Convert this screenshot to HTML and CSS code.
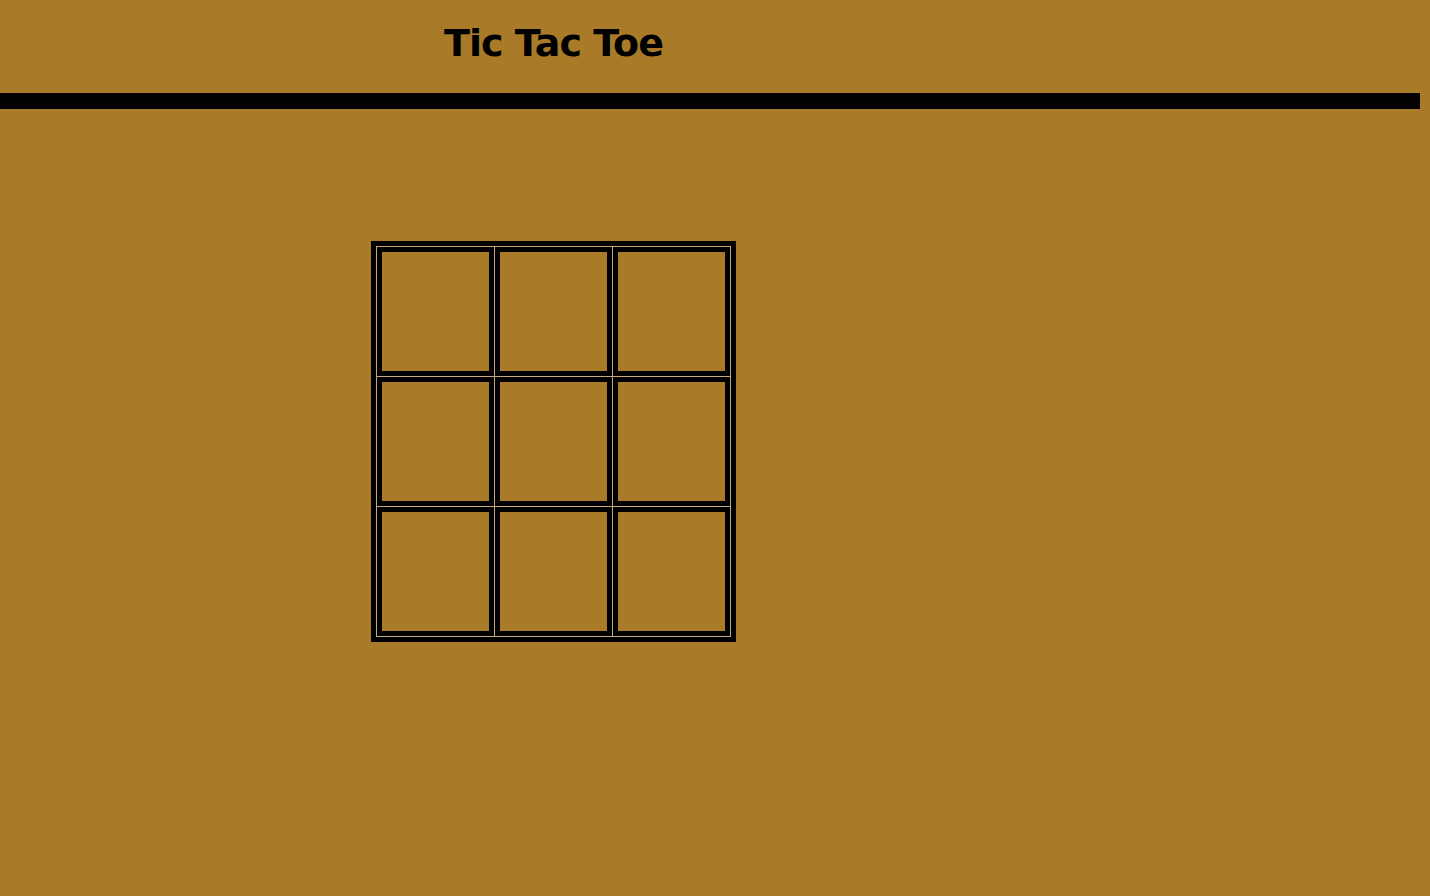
FILE: index.html
```html
<!DOCTYPE html>
<html lang="en">
<head>
<meta charset="utf-8">
<title>Tic Tac Toe</title>
<link rel="stylesheet" href="styles.css">
</head>
<body>
  <header class="header">
    <div class="column">
      <h1 class="title">Tic Tac Toe</h1>
    </div>
  </header>
  <div class="bar"></div>
  <main class="column board-area">
    <table class="board">
      <tr><td class="cell"></td><td class="cell"></td><td class="cell"></td></tr>
      <tr><td class="cell"></td><td class="cell"></td><td class="cell"></td></tr>
      <tr><td class="cell"></td><td class="cell"></td><td class="cell"></td></tr>
    </table>
  </main>
</body>
</html>
```

FILE: styles.css
```css
html, body {
  margin: 0;
  padding: 0;
}
body {
  background: #a97b29;
  font-family: "Comic Sans MS", "DejaVu Sans", sans-serif;
  color: #000;
  min-height: 896px;
}
.column {
  width: 1107px;
  display: flex;
  justify-content: center;
}
.header {
  height: 93px;
}
.title {
  margin: 0;
  padding-top: 20px;
  font-size: 38px;
  line-height: 46px;
  font-weight: bold;
  letter-spacing: -1px;
}
.bar {
  width: 1420px;
  height: 16px;
  background: #040203;
}
.board-area {
  padding-top: 132px;
}
.board {
  border: 5px solid #000;
  border-collapse: separate;
  border-spacing: 1px;
  background: #c4a77c;
}
.cell {
  width: 107px;
  height: 119px;
  padding: 0;
  border: 5px solid #000;
  background: #a97b29;
}
```
